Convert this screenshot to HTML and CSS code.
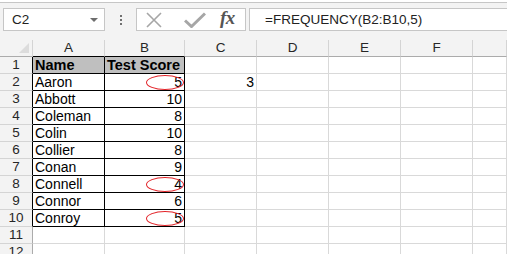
FILE: index.html
```
<!DOCTYPE html>
<html>
<head>
<meta charset="utf-8">
<link rel="stylesheet" href="styles.css">
</head>
<body>
<div class="app">
  <div class="fbar">
    <div class="namebox"><span class="nb-text">C2</span><span class="nb-arrow"></span></div>
    <div class="dots"><i></i><i></i><i></i></div>
    <div class="btns">
      <svg class="ic-x" width="16" height="16" viewBox="0 0 16 16"><path d="M1 1L15 15M15 1L1 15" stroke="#a6a6a6" stroke-width="1.6" fill="none"/></svg>
      <svg class="ic-ok" width="22" height="16" viewBox="0 0 22 16"><path d="M1 8.5L7.5 14.5L21 1.5" stroke="#a6a6a6" stroke-width="3" fill="none"/></svg>
      <span class="fx">fx</span>
    </div>
    <div class="formula">=FREQUENCY(B2:B10,5)</div>
  </div>
  <div class="sheet">
    <div class="ch corner"><span class="tri"></span></div>
    <div class="ch tb">A</div><div class="ch tb">B</div><div class="ch">C</div><div class="ch">D</div><div class="ch">E</div><div class="ch">F</div><div class="ch"></div>

    <div class="rh bk">1</div><div class="c t hd">Name</div><div class="c t hd">Test Score</div><div class="c"></div><div class="c"></div><div class="c"></div><div class="c"></div><div class="c"></div>
    <div class="rh bk">2</div><div class="c t">Aaron</div><div class="c t num">5<span class="oval"></span></div><div class="c num">3</div><div class="c"></div><div class="c"></div><div class="c"></div><div class="c"></div>
    <div class="rh bk">3</div><div class="c t">Abbott</div><div class="c t num">10</div><div class="c"></div><div class="c"></div><div class="c"></div><div class="c"></div><div class="c"></div>
    <div class="rh bk">4</div><div class="c t">Coleman</div><div class="c t num">8</div><div class="c"></div><div class="c"></div><div class="c"></div><div class="c"></div><div class="c"></div>
    <div class="rh bk">5</div><div class="c t">Colin</div><div class="c t num">10</div><div class="c"></div><div class="c"></div><div class="c"></div><div class="c"></div><div class="c"></div>
    <div class="rh bk">6</div><div class="c t">Collier</div><div class="c t num">8</div><div class="c"></div><div class="c"></div><div class="c"></div><div class="c"></div><div class="c"></div>
    <div class="rh bk">7</div><div class="c t">Conan</div><div class="c t num">9</div><div class="c"></div><div class="c"></div><div class="c"></div><div class="c"></div><div class="c"></div>
    <div class="rh bk">8</div><div class="c t">Connell</div><div class="c t num">4<span class="oval"></span></div><div class="c"></div><div class="c"></div><div class="c"></div><div class="c"></div><div class="c"></div>
    <div class="rh bk">9</div><div class="c t">Connor</div><div class="c t num">6</div><div class="c"></div><div class="c"></div><div class="c"></div><div class="c"></div><div class="c"></div>
    <div class="rh bk">10</div><div class="c t">Conroy</div><div class="c t num">5<span class="oval"></span></div><div class="c"></div><div class="c"></div><div class="c"></div><div class="c"></div><div class="c"></div>
    <div class="rh">11</div><div class="c"></div><div class="c"></div><div class="c"></div><div class="c"></div><div class="c"></div><div class="c"></div><div class="c"></div>
    <div class="rh">12</div><div class="c"></div><div class="c"></div><div class="c"></div><div class="c"></div><div class="c"></div><div class="c"></div><div class="c"></div>
  </div>
</div>
</body>
</html>
```
FILE: styles.css
```
html, body {
  margin: 0;
  padding: 0;
  width: 507px;
  height: 254px;
  overflow: hidden;
  background: #ffffff;
}
.app {
  font-family: "Liberation Sans", Arial, sans-serif;
  color: #000;
  width: 507px;
  overflow: hidden;
}
.fbar {
  box-sizing: border-box;
  border-top: 1px solid #c6c6c6;
  margin-top: 2px;
  height: 38px;
  background: #f3f3f3;
  display: flex;
  align-items: flex-start;
  padding: 5px 0 0 3px;
}
.namebox {
  width: 102px;
  height: 23px;
  box-sizing: border-box;
  border: 1px solid #c6c6c6;
  background: #fff;
  display: flex;
  align-items: center;
  justify-content: space-between;
  padding: 0 6px 0 8px;
}
.nb-text {
  font-size: 13.5px;
  color: #222;
}
.nb-arrow {
  width: 0;
  height: 0;
  border-left: 4px solid transparent;
  border-right: 4px solid transparent;
  border-top: 4px solid #6d6d6d;
}
.dots {
  width: 31px;
  height: 23px;
  display: flex;
  flex-direction: column;
  align-items: center;
  justify-content: center;
  gap: 2px;
}
.dots i {
  display: block;
  width: 2px;
  height: 2px;
  background: #707070;
}
.btns {
  width: 110px;
  height: 23px;
  box-sizing: border-box;
  border: 1px solid #c6c6c6;
  background: #fff;
  display: flex;
  align-items: center;
  padding-left: 9px;
}
.ic-x { margin-right: 22px; }
.ic-ok { margin-right: 14px; }
.fx {
  font-family: "Liberation Serif", "Times New Roman", serif;
  font-style: italic;
  font-weight: bold;
  font-size: 19px;
  color: #555;
  letter-spacing: -0.5px;
  margin-top: -3px;
}
.formula {
  margin-left: 3px;
  flex: 1;
  height: 23px;
  box-sizing: border-box;
  border: 1px solid #c6c6c6;
  border-right: none;
  background: #fff;
  font-size: 13.5px;
  color: #222;
  line-height: 21px;
  padding-left: 15px;
}
.sheet {
  display: grid;
  grid-template-columns: 33px 72px 80px 72px 72px 72px 72px 34px;
  grid-auto-rows: 17px;
  width: 507px;
  overflow: hidden;
}
.ch, .rh, .c {
  box-sizing: border-box;
  position: relative;
  white-space: nowrap;
  overflow: visible;
}
.ch {
  background: #f3f3f3;
  border-right: 1px solid #d4d4d4;
  border-bottom: 1px solid #ababab;
  text-align: center;
  font-size: 13.5px;
  line-height: 16px;
  color: #262626;
}
.ch.tb { border-bottom-color: #000; }
.tri {
  position: absolute;
  right: 3px;
  bottom: 3px;
  width: 0;
  height: 0;
  border-left: 10px solid transparent;
  border-bottom: 10px solid #dcdcdc;
}
.rh {
  background: #f3f3f3;
  border-right: 1px solid #ababab;
  border-bottom: 1px solid #d4d4d4;
  text-align: center;
  font-size: 13.5px;
  line-height: 16px;
  color: #262626;
}
.rh.bk { border-right-color: #000; }
.c {
  border-right: 1px solid #d9d9d9;
  border-bottom: 1px solid #d9d9d9;
  font-size: 14px;
  line-height: 16px;
  padding: 0 2px;
}
.c.t {
  border-right-color: #000;
  border-bottom-color: #000;
}
.c.hd {
  background: #bfbfbf;
  font-weight: bold;
  font-size: 14.5px;
  padding: 0 1px 0 2px;
}
.num {
  text-align: right;
  padding-right: 2px;
}
.oval {
  position: absolute;
  left: 41px;
  top: 1px;
  width: 38px;
  height: 15px;
  box-sizing: border-box;
  border: 1.3px solid #e3262b;
  border-radius: 50%;
}
```
